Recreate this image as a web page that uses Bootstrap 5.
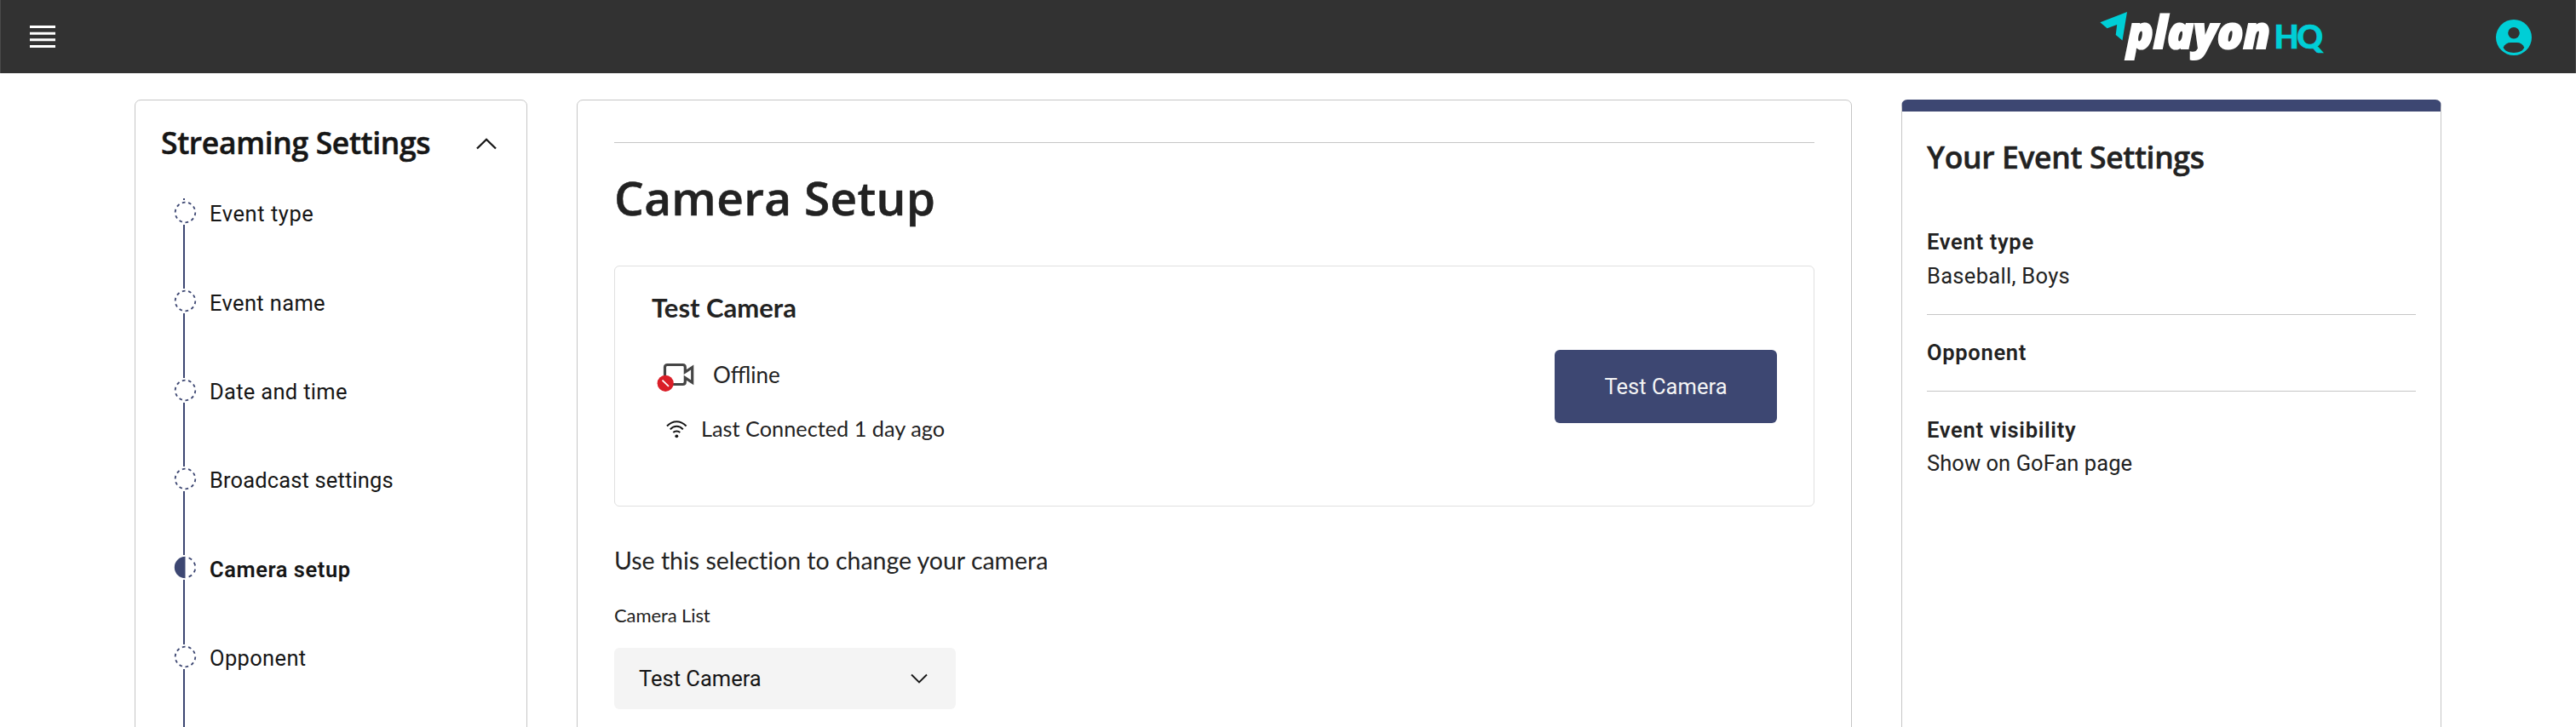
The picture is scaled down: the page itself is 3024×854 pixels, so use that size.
<!DOCTYPE html>
<html lang="en">
<head>
<meta charset="utf-8">
<meta name="viewport" content="width=device-width, initial-scale=1">
<title>Camera Setup - PlayOn HQ</title>
<link href="https://cdn.jsdelivr.net/npm/bootstrap@5.3.0/dist/css/bootstrap.min.css" rel="stylesheet">
<style>
  :root { --ink: #161616; --navy: #3d4772; --teal: #00ced6; --edge: #c6c6c6; }
  body { font-family: Roboto, "Liberation Sans", sans-serif; font-size: 25.5px; color: #222; background: #fff; height: 854px; overflow: hidden; }
  .lato { font-family: Lato, "Liberation Sans", sans-serif; }
  .topbar { height: 86px; background: #323232; border: solid #4a4a4a; border-width: 0 1px; padding: 0 50px 0 34px; }
  .brand-mark { margin-right: 190px; }
  .page { height: 768px; overflow: hidden; padding: 31px 158px 0; gap: 58px; }
  .panel { border: 1px solid var(--edge); border-radius: 7px; height: 780px; }
  .panel-nav { width: 461px; padding: 27px 35px 0 30px; color: var(--ink); }
  .panel-main { width: 1497px; padding: 49px 43px 0; }
  .panel-info { width: 634px; border-top: 14px solid var(--navy); padding: 31px 29px 0; }
  .title-md, .title-lg { font-family: "Open Sans", "Liberation Sans", sans-serif; font-weight: 600; -webkit-text-stroke: .5px currentColor; }
  .title-md { font-size: 35.5px; line-height: 48px; letter-spacing: -.35px; margin: -2px 0 2px; }
  .title-lg { font-size: 55px; line-height: 72px; letter-spacing: .3px; margin: 28px 0 0; }
  .rule { height: 1px; background: var(--edge); }

  .steps { margin: 40px 0 0 13px; }
  .steps::before { content: ""; display: block; width: 2px; height: 2px; margin-left: 13px; background: var(--navy); }
  .step { height: 104.35px; gap: 15px; }
  .step-rail { width: 29px; }
  .step-rail svg { width: 29px; height: 29px; fill: var(--navy); flex: none; margin-left: .5px; }
  .step-line { width: 2px; margin-left: 13px; background: var(--navy); }
  .step-label { line-height: 36px; margin-top: -1.8px; letter-spacing: .35px; }
  .t-wide { letter-spacing: .55px; }
  .t-soft { letter-spacing: .3px; }
  .t-snug { letter-spacing: .14px; }
  .t-tight { letter-spacing: .06px; }

  .cam-card { height: 283px; margin-top: 44px; border: 1px solid #e0e0e0; border-radius: 6px; padding: 28px 43px 0; }
  .cam-name { font-size: 31px; font-weight: 700; line-height: 40px; margin: 0; }
  .cam-status { margin-top: 43px; height: 32px; line-height: 32px; font-size: 26px; }
  .cam-seen { margin-top: 31px; height: 32px; line-height: 32px; font-size: 25.3px; }
  .btn-test { width: 261px; height: 86px; margin-top: 70px; padding: 0; border: 0; border-radius: 6px; background: var(--navy); color: #f4f4f4; font-size: 25.5px; line-height: 86px; letter-spacing: .05px; }
  .hint { font-size: 28.5px; line-height: 40px; margin: 43px 0 0; letter-spacing: -.02px; }
  .list-label { font-size: 22px; line-height: 28px; margin: 31px 0 24px; letter-spacing: -.1px; }
  .picker { width: 401px; height: 72px; border-radius: 6px; background: #f4f4f4; color: var(--ink); padding: 0 33px 0 29px; line-height: 72px; }

  .info { line-height: 39.5px; padding: 25.5px 0 24.5px; border-bottom: 1px solid var(--edge); }
  .info:first-of-type { margin-top: 31.5px; }
  .info:last-child { border-bottom: 0; }
  .info-name { font-weight: 600; letter-spacing: .7px; }
</style>
</head>
<body>
<svg class="d-none" xmlns="http://www.w3.org/2000/svg">
  <symbol id="dash" viewBox="0 0 32 32"><path d="M7.7 4.7a14.7 14.7 0 00-3 3.1L6.3 9A13.26 13.26 0 018.9 6.3zM4.6 12.3l-1.9-.6A12.51 12.51 0 002 16H4A11.48 11.48 0 014.6 12.3zM2.7 20.4a14.4 14.4 0 002 3.9l1.6-1.2a12.89 12.89 0 01-1.7-3.3zM7.8 27.3a14.4 14.4 0 003.9 2l.6-1.9A12.89 12.89 0 019 25.7zM11.7 2.7l.6 1.9A11.48 11.48 0 0116 4V2A12.51 12.51 0 0011.7 2.7zM24.2 27.3a15.18 15.18 0 003.1-3.1L25.7 23A11.53 11.53 0 0123 25.7zM27.4 19.7l1.9.6A15.47 15.47 0 0030 16H28A11.48 11.48 0 0127.4 19.7zM29.2 11.6a14.4 14.4 0 00-2-3.9L25.6 8.9a12.89 12.89 0 011.7 3.3zM24.1 4.6a14.4 14.4 0 00-3.9-2l-.6 1.9a12.89 12.89 0 013.3 1.7zM20.3 29.3l-.6-1.9A11.48 11.48 0 0116 28v2A21.42 21.42 0 0020.3 29.3z"/></symbol>
  <symbol id="half" viewBox="0 0 32 32"><path d="M23.76 6.86l1.29-1.53A13.98 13.98 0 0020.87 2.89l-.69 1.87A11.97 11.97 0 0123.76 6.86zM27.81 14l1.97-.41A13.89 13.89 0 0028.14 9.05L26.41 10A12.52 12.52 0 0127.81 14zM20.18 27.24l.69 1.87a13.98 13.98 0 004.18-2.44l-1.29-1.53A11.97 11.97 0 0120.18 27.24zM26.41 22L28.14 23a14.14 14.14 0 001.64-4.59L27.81 18.07A12.15 12.15 0 0126.41 22zM16 30V2a14 14 0 000 28z"/></symbol>
</svg>

<header class="topbar d-flex align-items-center justify-content-between">
  <svg width="30" height="26" viewBox="0 0 30 26" fill="#fff"><path d="M0 0h30v3H0zM0 7.8h30v3H0zM0 15.3h30v3H0zM0 23h30v3H0z"/></svg>
  <div class="d-flex align-items-center">
    <svg class="brand-mark" width="280" height="86" viewBox="2460 0 280 86">
      <path fill="#00ced6" d="M2466.4 26.3L2498 14L2492.5 47.5L2484.7 41L2486.2 29L2474.6 33.2Z"/>
      <text x="2498" y="57.3" fill="#fff" stroke="#fff" stroke-width="2.2" font-family="Open Sans" font-size="53.5" font-style="italic" font-weight="800" textLength="168" lengthAdjust="spacingAndGlyphs">playon</text>
      <text x="2670.5" y="57.4" fill="#00ced6" stroke="#00ced6" stroke-width=".7" font-family="Lato" font-size="38" font-weight="900" textLength="57.5">HQ</text>
    </svg>
    <svg width="44" height="44" viewBox="0 0 44 44"><circle cx="22" cy="23" r="21" fill="#00ced6"/><circle cx="22" cy="17.8" r="6.8" fill="#323232"/><path fill="#323232" d="M9.6 34.7C11.5 31 14.5 29.1 18.5 29.1h7c4 0 7 1.9 8.8 5.6C33 38.5 28 40.9 22 40.9S11 38.5 9.6 34.7z"/></svg>
  </div>
</header>

<main class="page d-flex align-items-start">
  <nav class="panel panel-nav flex-shrink-0">
    <div class="d-flex justify-content-between align-items-center">
      <h2 class="title-md">Streaming Settings</h2>
      <svg width="24" height="14" viewBox="0 0 24 14" fill="none" stroke="#161616" stroke-width="2.3"><path d="M1 12.5L12 1.8L23 12.5"/></svg>
    </div>
    <div class="steps">
      <div class="step d-flex"><div class="step-rail d-flex flex-column"><svg><use href="#dash"/></svg><span class="step-line flex-grow-1"></span></div><div class="step-label t-wide">Event type</div></div>
      <div class="step d-flex"><div class="step-rail d-flex flex-column"><svg><use href="#dash"/></svg><span class="step-line flex-grow-1"></span></div><div class="step-label">Event name</div></div>
      <div class="step d-flex"><div class="step-rail d-flex flex-column"><svg><use href="#dash"/></svg><span class="step-line flex-grow-1"></span></div><div class="step-label t-soft">Date and time</div></div>
      <div class="step d-flex"><div class="step-rail d-flex flex-column"><svg><use href="#dash"/></svg><span class="step-line flex-grow-1"></span></div><div class="step-label t-snug">Broadcast settings</div></div>
      <div class="step d-flex"><div class="step-rail d-flex flex-column"><svg><use href="#half"/></svg><span class="step-line flex-grow-1"></span></div><div class="step-label t-wide fw-semibold">Camera setup</div></div>
      <div class="step d-flex"><div class="step-rail d-flex flex-column"><svg><use href="#dash"/></svg><span class="step-line flex-grow-1"></span></div><div class="step-label">Opponent</div></div>
    </div>
  </nav>

  <section class="panel panel-main flex-shrink-0">
    <div class="rule"></div>
    <h1 class="title-lg">Camera Setup</h1>
    <div class="cam-card d-flex justify-content-between align-items-start">
      <div class="lato">
        <h3 class="cam-name">Test Camera</h3>
        <div class="cam-status d-flex">
          <svg class="flex-shrink-0" width="72" height="38" viewBox="765 424 72 38">
            <path d="M780.5 445V431.5Q780.5 428.5 783.5 428.5H801.5Q804.3 428.5 804.3 431.5V437L812.7 431.5V449.3L804.3 443.8V448.5Q804.3 451.5 801.5 451.5H787" fill="none" stroke="#454545" stroke-width="3.2"/>
            <circle cx="781.2" cy="450.3" r="9.6" fill="#da1e28"/><path d="M777.5 446.7L785 453.9" stroke="#fff" stroke-width="1.8"/>
          </svg>
          <span>Offline</span>
        </div>
        <div class="cam-seen d-flex">
          <svg class="flex-shrink-0" width="58" height="32" viewBox="765 487 58 32" fill="none" stroke="#161616" stroke-width="2">
            <path d="M783 500.5Q788 495.2 794.3 495.2T805.6 500.5M786.8 504.3Q790 500.8 794.3 500.8T801.8 504.3M790.3 508Q791.9 506.4 794.3 506.4T798.3 508"/><circle cx="794.3" cy="512.3" r="1.9" fill="#161616" stroke="none"/>
          </svg>
          <span>Last Connected 1 day ago</span>
        </div>
      </div>
      <button class="btn btn-test" type="button">Test Camera</button>
    </div>
    <p class="lato hint">Use this selection to change your camera</p>
    <p class="lato list-label">Camera List</p>
    <div class="picker d-flex justify-content-between align-items-center">
      <span>Test Camera</span>
      <svg width="20" height="12" viewBox="0 0 20 12" fill="none" stroke="#161616" stroke-width="1.9"><path d="M1 1.5L10 10.5L19 1.5"/></svg>
    </div>
  </section>

  <aside class="panel panel-info flex-shrink-0">
    <h2 class="title-md">Your Event Settings</h2>
    <div class="info"><div class="info-name">Event type</div><div class="t-soft">Baseball, Boys</div></div>
    <div class="info"><div class="info-name">Opponent</div></div>
    <div class="info"><div class="info-name">Event visibility</div><div class="t-tight">Show on GoFan page</div></div>
  </aside>
</main>
<script src="https://cdn.jsdelivr.net/npm/bootstrap@5.3.0/dist/js/bootstrap.bundle.min.js"></script>
</body>
</html>
